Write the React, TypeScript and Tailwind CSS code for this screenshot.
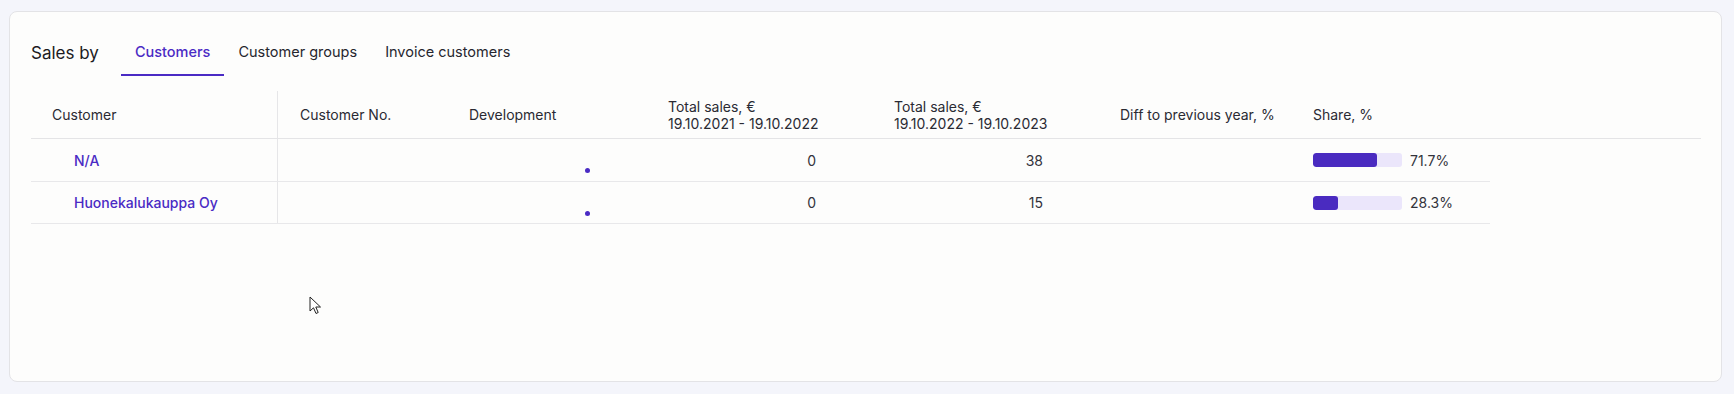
import React from 'react'

const rows = [
  { name: 'N/A', prev: '0', curr: '38', share: 71.7 },
  { name: 'Huonekalukauppa Oy', prev: '0', curr: '15', share: 28.3 },
]

function Tab({ label, active = false }: { label: string; active?: boolean }) {
  return (
    <button
      className={
        active
          ? 'px-[14px] pt-3 pb-3 border-b-2 border-[#4a2bc4] text-[#4a2bc4] text-[14.5px] font-medium leading-5'
          : 'px-[14px] pt-3 pb-3 border-b-2 border-transparent text-[#26262e] text-[14.5px] leading-5'
      }
    >
      {label}
    </button>
  )
}

function Dot() {
  return (
    <svg width="160" height="30" viewBox="0 0 160 30" className="block">
      <circle cx="118.5" cy="25.5" r="2.5" fill="#4a2bc4" />
    </svg>
  )
}

export default function App() {
  return (
    <div
      className="relative w-[1734px] h-[394px] bg-[#f4f5fb] pt-[11px] pl-[9px]"
      style={{ fontFamily: 'Inter, "Noto Sans", sans-serif' }}
    >
      <div className="w-[1713px] h-[371px] bg-[#fdfdfc] border border-[#e3e3e6] rounded-lg pt-[18px] pl-[21px]">

        {/* TABS */}
        <div className="flex items-center">
          <span className="text-[17px] text-[#1b1b22] leading-5 mr-[22px]">Sales by</span>
          <Tab label="Customers" active />
          <Tab label="Customer groups" />
          <Tab label="Invoice customers" />
        </div>

        {/* TABLE */}
        <div className="mt-[15px] text-[14px] text-[#2a2a33]">
          <div className="flex h-[48px] w-[1670px] border-b border-[#e4e4e6]">
            <div className="w-[247px] pl-[21px] flex items-center border-r border-[#e6e6e8]">Customer</div>
            <div className="w-[170px] pl-[22px] flex items-center">Customer No.</div>
            <div className="w-[200px] pl-[21px] flex items-center">Development</div>
            <div className="w-[226px] pl-5 flex items-center leading-[17px]">
              <div>Total sales, €<br />19.10.2021 - 19.10.2022</div>
            </div>
            <div className="w-[226px] pl-5 flex items-center leading-[17px]">
              <div>Total sales, €<br />19.10.2022 - 19.10.2023</div>
            </div>
            <div className="w-[193px] pl-5 flex items-center whitespace-nowrap">Diff to previous year, %</div>
            <div className="w-[197px] pl-5 flex items-center">Share, %</div>
            <div className="flex-1" />
          </div>

          {rows.map((r, i) => (
            <div key={r.name} className={`flex w-[1459px] border-b border-[#e8e8ea] ${i === 0 ? 'h-[43px]' : 'h-[42px]'}`}>
              <div className="w-[247px] pl-[43px] flex items-center border-r border-[#e6e6e8] text-[#4a2bc4] font-medium">{r.name}</div>
              <div className="w-[170px]" />
              <div className="w-[200px] pl-[21px] flex items-center">
                <Dot />
              </div>
              <div className="w-[226px] pr-[58px] flex items-center justify-end text-[#33333b]">{r.prev}</div>
              <div className="w-[226px] pr-[57px] flex items-center justify-end text-[#33333b]">{r.curr}</div>
              <div className="w-[193px]" />
              <div className="w-[197px] pl-5 flex items-center gap-2 text-[#33333b]">
                <div className="w-[89px] h-[14px] rounded-[3px] bg-[#ebe6fb] overflow-hidden">
                  <div className="h-full rounded-[3px] bg-[#4a2bc0]" style={{ width: `${r.share}%` }} />
                </div>
                <span>{r.share}%</span>
              </div>
            </div>
          ))}
        </div>
      </div>

      {/* cursor */}
      <svg className="absolute left-[309px] top-[296px]" width="13" height="20" viewBox="0 0 13 20">
        <path d="M1 1 L1 15 L4.5 11.8 L7 17.5 L9.2 16.5 L6.8 11 L11.5 11 Z" fill="#fff" stroke="#222" strokeWidth="1" strokeLinejoin="round" />
      </svg>
    </div>
  )
}
